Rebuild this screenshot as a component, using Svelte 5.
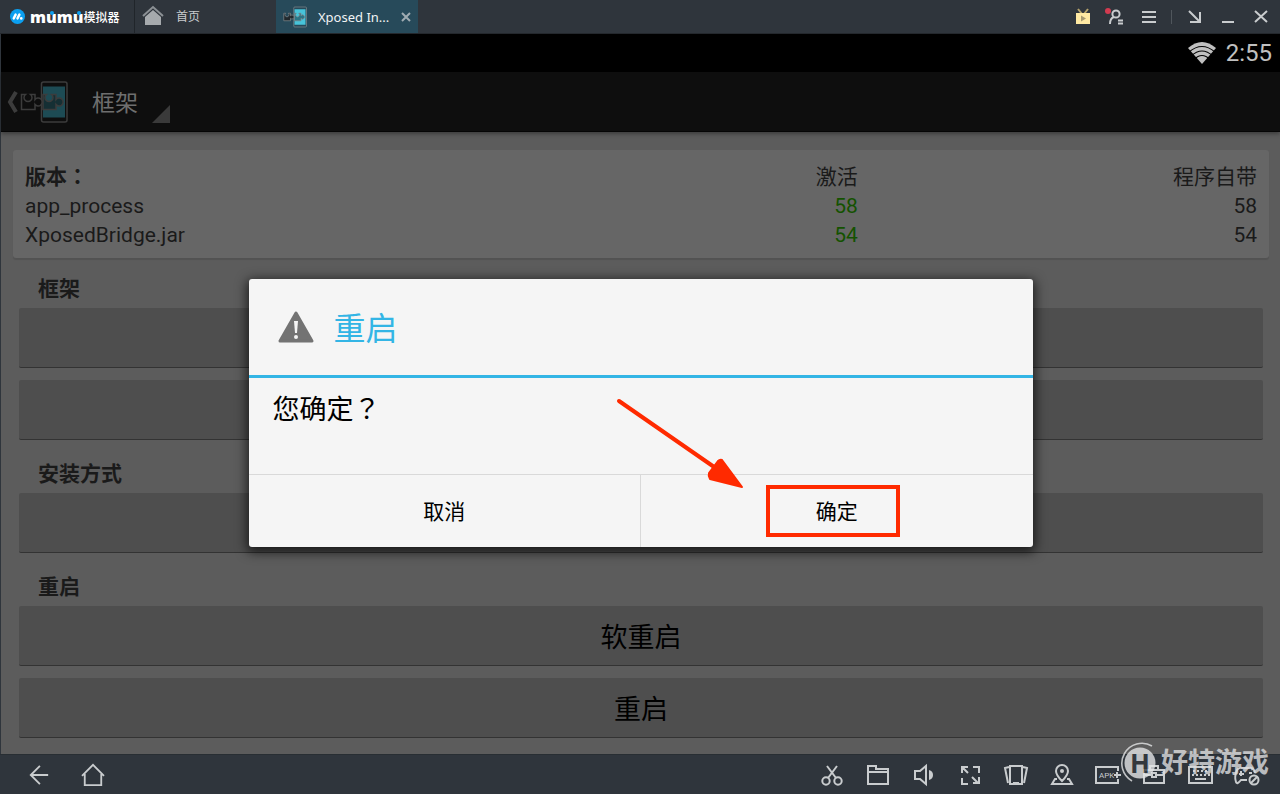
<script lang="ts">
	const versions = [
		{ name: 'app_process', active: 58, bundled: 58 },
		{ name: 'XposedBridge.jar', active: 54, bundled: 54 }
	];

	const sections = [
		{ title: '框架', buttons: [{ label: '安装/更新', text: '' }, { label: '卸载', text: '' }] },
		{ title: '安装方式', buttons: [{ label: '选择安装方式', text: '' }] },
		{ title: '重启', buttons: [{ label: '软重启', text: '软重启' }, { label: '重启', text: '重启' }] }
	];

	let open = $state(true);

	function ask() {
		open = true;
	}

	function close() {
		open = false;
	}
</script>

<svelte:window onkeydown={(e) => open && e.key === 'Escape' && close()} />

{#snippet puzzle()}
	<svg class="puzzle" viewBox="0 0 48 44" fill="none" stroke="currentColor" aria-hidden="true">
		<rect x="21.5" y="2" width="25.5" height="40" rx="2" stroke-width="1.5" />
		<rect class="puzzle-screen" x="23" y="6.500" width="22" height="31" stroke="none" />
		<path
			class="puzzle-piece"
			stroke-width="1.5"
			d="M23 14.500h3.500a4 4 0 1 0 5 0H36v5a4 4 0 1 1 0 5v5H23z"
		/>
		<path
			class="puzzle-left"
			stroke-width="1.5"
			d="M1.500 14.500h4a4 4 0 1 0 5 0H15v5a4 4 0 1 1 0 5v5H1.500z"
		/>
	</svg>
{/snippet}

<div class="emulator">
	<header class="titlebar">
		<div class="brand">
			<svg class="brand-mark" viewBox="0 0 16 16" aria-hidden="true">
				<circle cx="8" cy="8" r="8" fill="#0b9ff0" />
				<path d="m4 10 2-4M8 10l2-4" stroke="#fff" stroke-width="2.6" stroke-linecap="round" />
				<circle cx="12" cy="10" r="1.4" fill="#fff" />
			</svg>
			<span class="brand-name">m<i>u</i>m<i>u</i></span><span class="brand-cn">模拟器</span>
		</div>
		<button type="button" class="home-tab">
			<svg viewBox="0 0 22 20" aria-hidden="true">
				<path d="M1 10 11 1l10 9" fill="none" stroke="#8b9094" stroke-width="2" />
				<path d="m11 4 8 7v8H3v-8z" fill="#a6aaad" />
			</svg>
			首页
		</button>
		<div class="app-tab">
			{@render puzzle()}
			<span class="app-tab-title">Xposed In...</span>
			<button type="button" class="tab-close" aria-label="关闭标签">
				<svg viewBox="0 0 10 10" stroke="currentColor" stroke-width="2" aria-hidden="true"><path d="m1 1 8 8M9 1 1 9" /></svg>
			</button>
		</div>
		<div class="window-tools">
			<button type="button" aria-label="直播">
				<svg viewBox="0 0 24 24" aria-hidden="true">
					<path d="m7 4 4 5M17 4l-4 5" stroke="#b5a36c" stroke-width="2" />
					<path d="M5 8h14v11H5z" fill="#ffe9a3" />
					<path d="m10 10.500 5 3-5 3z" fill="#a89a70" />
				</svg>
			</button>
			<button type="button" aria-label="账号">
				<svg viewBox="0 0 24 24" fill="none" stroke="currentColor" stroke-width="2" aria-hidden="true">
					<circle cx="4" cy="6" r="3" fill="#d23b50" stroke="none" />
					<circle cx="12" cy="9" r="3.600" />
					<path d="M10 12c-3 1-4 4-4 7M14 15.500h5M14 18.500h5" />
				</svg>
			</button>
			<button type="button" aria-label="菜单">
				<svg viewBox="0 0 24 24" stroke="currentColor" stroke-width="2" aria-hidden="true"><path d="M5 7h14M5 12h14M5 17h14" /></svg>
			</button>
			<span class="tool-divider"></span>
			<button type="button" aria-label="小窗">
				<svg viewBox="0 0 24 24" fill="none" stroke="currentColor" stroke-width="2" aria-hidden="true"><path d="m6 6 11 11M17 7v10H7" /></svg>
			</button>
			<button type="button" aria-label="最小化">
				<svg viewBox="0 0 24 24" stroke="currentColor" stroke-width="2" aria-hidden="true"><path d="M6 17h12" /></svg>
			</button>
			<button type="button" aria-label="关闭">
				<svg viewBox="0 0 24 24" stroke="currentColor" stroke-width="2" aria-hidden="true"><path d="m6 6 12 11M18 6 6 17" /></svg>
			</button>
		</div>
	</header>

	<div class="statusbar">
		<svg class="wifi" viewBox="0 0 28 22" aria-hidden="true">
			<path d="M14 22 0 6Q14-6 28 6z" fill="#c0c0c0" />
			<path d="M1 10Q14-1 27 10M3 14Q14 4 25 14M6 17.500Q14 9.500 22 17.500" fill="none" stroke="#000" stroke-width="1.1" />
		</svg>
		<time>2:55</time>
	</div>

	<div class="screen">
		<nav class="actionbar">
			<button type="button" class="up" aria-label="返回">
				<svg class="chevron" viewBox="0 0 10 22" fill="none" stroke="currentColor" stroke-width="4" aria-hidden="true"><path d="M9 1 3 11l6 10" /></svg>
				{@render puzzle()}
			</button>
			<button type="button" class="spinner">
				框架
				<svg viewBox="0 0 18 18" aria-hidden="true"><path d="M18 0v18H0z" fill="#3a3a3a" /></svg>
			</button>
		</nav>

		<main>
			<table class="card">
				<thead>
					<tr><th class="strong">版本：</th><th>激活</th><th>程序自带</th></tr>
				</thead>
				<tbody>
					{#each versions as row}
						<tr><td>{row.name}</td><td class="ok">{row.active}</td><td>{row.bundled}</td></tr>
					{/each}
				</tbody>
			</table>

			{#each sections as section}
				<section>
					<h2>{section.title}</h2>
					{#each section.buttons as button}
						<button type="button" class="action" aria-label={button.label} onclick={ask}>{button.text}</button>
					{/each}
				</section>
			{/each}
		</main>

		{#if open}
			<div class="overlay">
				<div class="dialog" role="alertdialog" aria-modal="true" aria-labelledby="dialog-title">
					<div class="dialog-head">
						<svg class="warning" viewBox="0 0 36 32" aria-hidden="true">
							<path d="M18 2 34 30H2z" fill="#737373" stroke="#737373" stroke-width="3" stroke-linejoin="round" />
							<path d="M16 10h4l-1 12h-2z" fill="#f4f4f4" />
							<circle cx="18" cy="26" r="2" fill="#f4f4f4" />
						</svg>
						<h1 id="dialog-title">重启</h1>
					</div>
					<p class="dialog-text">您确定？</p>
					<div class="dialog-actions">
						<button type="button" onclick={close}>取消</button>
						<button type="button" onclick={close}>确定</button>
					</div>
					<svg class="pointer" viewBox="0 0 295 145" aria-hidden="true">
						<path d="m9 6 98 68" stroke="#ff2a00" stroke-width="4" stroke-linecap="round" />
						<path d="m132 92-20-27q-2-1-4 1l-9 12q-1 3 1 6z" fill="#ff2a00" stroke="#ff2a00" stroke-width="2" stroke-linejoin="round" />
						<rect x="158" y="92" width="130" height="48" fill="none" stroke="#ff2a00" stroke-width="4" />
					</svg>
				</div>
			</div>
		{/if}
	</div>

	<footer class="toolbar">
		<div class="nav-keys">
			<button type="button" aria-label="后退">
				<svg viewBox="0 0 24 24" aria-hidden="true"><path d="M22 12H3M13 2 3 12l10 10" /></svg>
			</button>
			<button type="button" aria-label="主页">
				<svg viewBox="0 0 24 24" aria-hidden="true"><path d="M0 13 12 1l12 12M3 11v12h18V11" /></svg>
			</button>
		</div>
		<div class="tool-keys">
			<button type="button" aria-label="截图">
				<svg viewBox="0 0 24 24" aria-hidden="true"><circle cx="6" cy="18" r="3.700" /><circle cx="18" cy="18" r="3.700" /><path d="m7 3 9 12M17 3 8 15" /></svg>
			</button>
			<button type="button" aria-label="文件夹">
				<svg viewBox="0 0 24 24" aria-hidden="true"><path d="M2 21V3h8v3h12v15zM2 9h20" /></svg>
			</button>
			<button type="button" aria-label="音量">
				<svg viewBox="0 0 24 24" aria-hidden="true"><path d="M3 8h5l6-5v18l-6-5H3z" /><path class="solid" d="M17 7q4 1 4 5t-4 5z" /></svg>
			</button>
			<button type="button" aria-label="全屏">
				<svg viewBox="0 0 24 24" aria-hidden="true"><path d="M4 10V4h6M15 4h6v6M4 15v6h6M21 14v6h-6M4 4l6 6M14 14l6 6" /></svg>
			</button>
			<button type="button" aria-label="摇一摇">
				<svg viewBox="0 0 24 24" aria-hidden="true"><path d="M6 3h12v18H6zM9 20h6M4 20 1 5l4-1M20 20l3-15-4-1" /></svg>
			</button>
			<button type="button" aria-label="定位">
				<svg viewBox="0 0 24 24" aria-hidden="true"><path d="M12 18Q6 12 6 8a6 6 0 0 1 12 0q0 4-6 10zM7 16H5l-3 5h20l-3-5h-2" /><circle class="solid" cx="12" cy="8" r="2" /></svg>
			</button>
			<button type="button" aria-label="安装 APK">
				<svg viewBox="0 0 24 24" aria-hidden="true"><path d="M22 8V4H0v16h22v-4M18 12h7M21 9v6" /><text x="3" y="15">APK</text></svg>
			</button>
			<button type="button" aria-label="工具箱">
				<svg viewBox="0 0 24 24" aria-hidden="true"><path d="M2 7h20v13H2zM8 7V3h8v4M2 12h8M14 12h8M10 10h4v4h-4z" /></svg>
			</button>
			<button type="button" aria-label="键盘">
				<svg viewBox="0 0 24 24" aria-hidden="true"><path d="M1 4h23v16H1zM7 16h11" /><path stroke-dasharray="2 2" d="M5 8h16M4 12h18" /></svg>
			</button>
			<button type="button" aria-label="手柄">
				<svg viewBox="0 0 24 24" aria-hidden="true"><path d="M13 17H7q-4 5-5 2-2-5 1-12 2-3 5-2h7q3-1 5 2l1 3M7 8v5M5 11h5M15 10h3" /><circle cx="20" cy="17" r="4.500" /><path d="m17 20 6-6" /></svg>
			</button>
		</div>
	</footer>

	<div class="watermark">
		<svg viewBox="0 0 40 40" aria-hidden="true">
			<circle cx="20" cy="20" r="15.500" fill="#e4e5e6" />
			<path d="M32 3A20 20 0 1 0 12 38" fill="none" stroke="#e4e5e6" stroke-width="1.600" />
			<text x="20" y="30" text-anchor="middle">H</text>
		</svg>
		<span>好特游戏</span>
	</div>
</div>

<style>
	:global(body) {
		margin: 0;
		background: #2f353c;
	}

	.emulator {
		position: relative;
		display: flex;
		flex-direction: column;
		min-height: 100vh;
		font-family: Roboto, 'Noto Sans CJK SC', sans-serif;
		color: #c9ccce;
		background: #2f353c;
	}

	button {
		padding: 0;
		border: none;
		background: none;
		color: inherit;
		font-family: inherit;
		cursor: pointer;
	}

	svg {
		display: block;
		overflow: visible;
	}

	.titlebar {
		display: flex;
		height: 33px;
		border-bottom: 1px solid #24282d;
	}

	.brand {
		display: flex;
		align-items: center;
		width: 124px;
		padding-left: 10px;
		border-right: 1px solid #20252a;
		color: #fff;
	}

	.brand-mark {
		width: 15px;
		height: 15px;
		margin-right: 5px;
	}

	.brand-name {
		font-family: 'Open Sans', sans-serif;
		font-size: 16px;
		font-weight: 800;
		line-height: 20px;
	}

	.brand-name i {
		position: relative;
		font-style: normal;
	}

	.brand-name i::after {
		content: '';
		position: absolute;
		top: 5px;
		left: 4px;
		width: 4px;
		height: 4px;
		border-radius: 50%;
		background: #0b9ff0;
	}

	.brand-cn {
		font-size: 12px;
		font-weight: 500;
	}

	.home-tab {
		display: flex;
		align-items: center;
		gap: 12px;
		width: 141px;
		padding: 0 0 2px 7px;
		font-size: 12px;
	}

	.home-tab svg {
		width: 22px;
		height: 20px;
	}

	.app-tab {
		display: flex;
		align-items: center;
		width: 128px;
		padding: 0 7px;
		background: #274a5a;
		color: #7b8488;
	}

	.app-tab .puzzle {
		width: 24px;
		height: 22px;
		--screen: #47c3d9;
		--piece: #2b7585;
		--left: #22292d;
	}

	.app-tab-title {
		margin-left: 11px;
		font-family: 'Noto Sans', sans-serif;
		font-size: 13px;
		color: #f0f3f4;
		white-space: nowrap;
	}

	.tab-close {
		margin-left: auto;
		color: #a0acb2;
	}

	.tab-close svg {
		width: 10px;
		height: 10px;
	}

	.puzzle-screen {
		fill: var(--screen);
	}

	.puzzle-piece {
		fill: var(--piece);
	}

	.puzzle-left {
		fill: var(--left);
	}

	.window-tools {
		display: flex;
		align-items: center;
		margin-left: auto;
		padding-right: 3px;
	}

	.window-tools button {
		display: grid;
		place-items: center;
		width: 33px;
		height: 32px;
	}

	.window-tools svg {
		width: 24px;
		height: 24px;
	}

	.tool-divider {
		width: 1px;
		height: 14px;
		margin: 0 6px;
		background: #50565c;
	}

	.statusbar {
		display: flex;
		align-items: center;
		justify-content: flex-end;
		gap: 10px;
		height: 38px;
		margin-left: 1px;
		padding-right: 8px;
		background: #000;
		color: #c0c0c0;
		font-size: 24px;
	}

	.wifi {
		width: 28px;
		height: 22px;
	}

	.screen {
		position: relative;
		flex: 1;
		margin-left: 1px;
		background: #5c5c5c;
	}

	.actionbar {
		display: flex;
		height: 59px;
		background: #0e0e0e;
		border-bottom: 1px solid #050505;
		box-shadow: 0 2px 4px rgba(0, 0, 0, 0.35);
	}

	.up {
		display: flex;
		align-items: center;
		gap: 3px;
		padding-left: 6px;
		color: #3c3c3c;
	}

	.chevron {
		width: 10px;
		height: 22px;
	}

	.up .puzzle {
		width: 48px;
		height: 44px;
		--screen: #1d4b54;
		--piece: #152f34;
		--left: #0e0e0e;
	}

	.spinner {
		display: flex;
		align-items: center;
		gap: 14px;
		margin-left: 24px;
		padding-bottom: 2px;
		font-size: 23px;
		color: #6e6e6e;
	}

	.spinner svg {
		align-self: flex-end;
		width: 18px;
		height: 18px;
		margin-bottom: 6px;
	}

	main {
		padding: 18px 11px 13px 12px;
		color: #1a1a1a;
	}

	.card {
		width: 100%;
		padding: 13px 12px 8px;
		border-spacing: 0;
		border-radius: 3px;
		background: #666;
		box-shadow: 0 2px 1px rgba(0, 0, 0, 0.1);
		table-layout: fixed;
		font-size: 21px;
	}

	.card th,
	.card td {
		height: 29px;
		padding: 0;
		text-align: right;
		font-weight: 400;
		line-height: 29px;
	}

	.card th:first-child,
	.card td:first-child {
		text-align: left;
	}

	.card th:last-child {
		width: 32.4%;
	}

	/* the TC face centres full-width punctuation */
	.card .strong {
		font-family: Roboto, 'Noto Sans CJK TC', sans-serif;
		font-weight: 700;
	}

	.card .ok {
		color: #145200;
	}

	section {
		display: flex;
		flex-direction: column;
		gap: 12px;
		padding: 0 6px 3px;
	}

	h2 {
		margin: 14px 0 -10px;
		padding-left: 19px;
		font-size: 21px;
		font-weight: 700;
		line-height: 34px;
	}

	.action {
		height: 60px;
		border-radius: 2px;
		border-bottom: 1px solid #333;
		background: #4e4e4e;
		color: #000;
		font-size: 27px;
	}

	.overlay {
		position: absolute;
		inset: 0;
		display: flex;
		align-items: center;
		justify-content: center;
	}

	.dialog {
		position: relative;
		width: 90%;
		max-width: 784px;
		border-radius: 3px;
		background: #f5f5f5;
		color: #000;
		box-shadow: 0 3px 12px 2px rgba(0, 0, 0, 0.7);
	}

	.dialog-head {
		display: flex;
		align-items: center;
		gap: 20px;
		height: 96px;
		padding-left: 29px;
		border-bottom: 3px solid #33b5e5;
	}

	.warning {
		width: 36px;
		height: 32px;
	}

	h1 {
		margin: 0;
		padding-bottom: 2px;
		color: #33b5e5;
		font-size: 32px;
		font-weight: 400;
	}

	.dialog-text {
		margin: 0;
		padding: 12px 24px 44px;
		font-family: Roboto, 'Noto Sans CJK TC', sans-serif;
		font-size: 27px;
		line-height: 40px;
	}

	.dialog-actions {
		display: flex;
		border-top: 1px solid #d9d9d9;
	}

	.dialog-actions button {
		flex: 1;
		height: 72px;
		padding-bottom: 2px;
		font-size: 21px;
	}

	.dialog-actions button + button {
		border-left: 1px solid #d9d9d9;
	}

	.pointer {
		position: absolute;
		left: calc(50% - 31px);
		bottom: 7px;
		width: 295px;
		height: 145px;
		pointer-events: none;
	}

	.toolbar {
		display: flex;
		align-items: center;
		justify-content: space-between;
		height: 40px;
		padding: 0 11px 0 12px;
		border-top: 1px solid #282e33;
		box-sizing: border-box;
	}

	.nav-keys,
	.tool-keys {
		display: flex;
	}

	.toolbar button {
		display: grid;
		place-items: center;
		width: 46px;
		height: 39px;
	}

	.nav-keys button {
		width: 54px;
	}

	.toolbar svg {
		width: 24px;
		height: 24px;
		fill: none;
		stroke: #c9ccce;
		stroke-width: 2;
	}

	.nav-keys svg {
		width: 22px;
		height: 22px;
	}

	.toolbar .solid,
	.toolbar text {
		fill: #c9ccce;
		stroke: none;
		font-size: 8px;
	}

	.watermark {
		position: absolute;
		right: 11px;
		bottom: 9px;
		display: flex;
		align-items: center;
		gap: 1px;
		opacity: 0.8;
		color: #dcdddf;
		font-size: 27px;
		font-weight: 700;
		line-height: 44px;
		pointer-events: none;
	}

	.watermark svg {
		width: 40px;
		height: 40px;
	}

	.watermark text {
		fill: #34393f;
		font-family: 'Open Sans', sans-serif;
		font-size: 26px;
		font-weight: 700;
	}
</style>
